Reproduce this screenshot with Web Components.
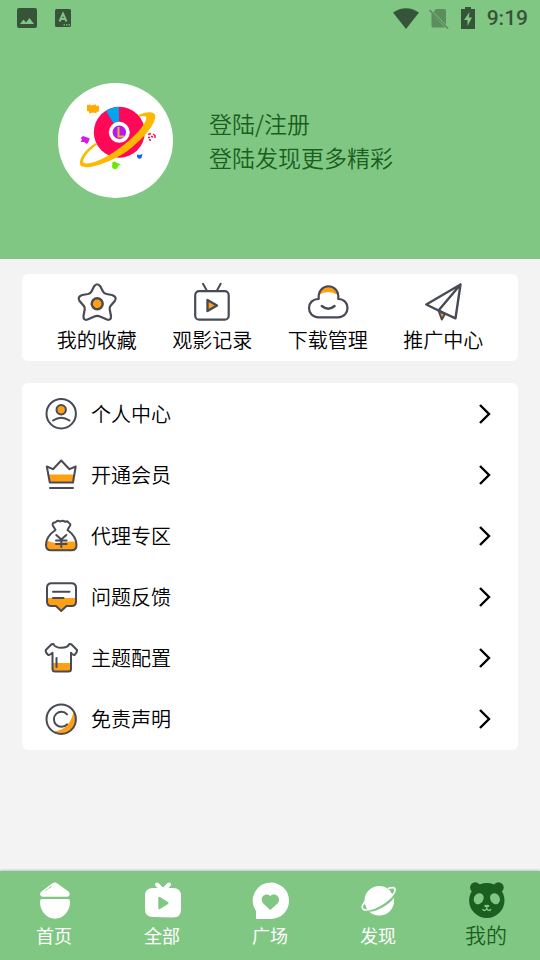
<!DOCTYPE html>
<html lang="zh-CN">
<head>
<meta charset="utf-8">
<meta name="viewport" content="width=device-width, initial-scale=1">
<title>我的</title>
<style>
  body { margin: 0; font-family: "Noto Sans CJK SC", sans-serif; background: #f3f3f3; color: #000; }
</style>
</head>
<body>
<app-shell>
  <status-bar slot="top" time="9:19"></status-bar>
  <profile-header slot="top">
    <span slot="title">登陆/注册</span>
    <span slot="subtitle">登陆发现更多精彩</span>
  </profile-header>
  <quick-card>
    <quick-item icon="star">我的收藏</quick-item>
    <quick-item icon="tv">观影记录</quick-item>
    <quick-item icon="cloud">下载管理</quick-item>
    <quick-item icon="plane">推广中心</quick-item>
  </quick-card>
  <menu-card>
    <menu-row icon="user">个人中心</menu-row>
    <menu-row icon="crown">开通会员</menu-row>
    <menu-row icon="bag">代理专区</menu-row>
    <menu-row icon="bubble">问题反馈</menu-row>
    <menu-row icon="shirt">主题配置</menu-row>
    <menu-row icon="copyright">免责声明</menu-row>
  </menu-card>
  <tab-bar slot="bottom">
    <tab-item icon="home">首页</tab-item>
    <tab-item icon="all">全部</tab-item>
    <tab-item icon="square">广场</tab-item>
    <tab-item icon="planet">发现</tab-item>
    <tab-item icon="panda" active>我的</tab-item>
  </tab-bar>
</app-shell>
<script>
const O = '#ff9f14';
const line = (size, inner) => `<svg viewBox="0 0 ${size} ${size}" width="${size}" height="${size}" fill="none" stroke="#484a56" stroke-width="2" stroke-linecap="round" stroke-linejoin="round" aria-hidden="true">${inner}</svg>`;
const solid = inner => `<svg viewBox="0 0 40 40" width="40" height="40" fill="currentColor" aria-hidden="true">${inner}</svg>`;
const ICONS = {
  star: line(40, `<path d="M17 4.500Q20.200 0 23.400 4.500L26 9.500Q27 11.500 29.500 12L35 13Q40.500 15 37.800 19L33.500 24Q32.300 25.400 32.700 27.500L34 34Q34.200 38.800 30 37.500L23 34.600Q20.200 33.300 17.400 34.600L10.500 37.500Q6.300 38.800 6.500 34L7.700 27.500Q8.100 25.400 6.900 24L2.600 19Q-.2 15 5.300 13L11 12Q13.500 11.500 14.500 9.500Z" stroke-width="2.200"/><circle cx="20.200" cy="21.700" r="5.500" fill="${O}" stroke-width="2.400"/>`),
  tv: line(40, `<rect x="3.200" y="9.200" width="33.500" height="28.500" rx="4" stroke-width="2.200"/><path d="M11 1.800L14.500 8M28.700 1.800L25.200 8"/><path d="M15.500 18v11l9.500-5.500Z" fill="${O}" stroke-width="2.400"/>`),
  cloud: line(40, `<path d="M10.700 13C12 1.500 28.500 1.500 30 13Q20 7 10.700 13Z" fill="${O}" stroke="none"/><path d="M10.700 17C9 0 32 0 30.300 17C36 17 39.500 21 39.500 26S36 35.300 30 35.300H10.500C4.500 35.300 1 31 1 26S4.500 17 10.700 17" stroke-width="2.200"/><path d="M13.800 24Q20.200 29.500 26.600 24" stroke-width="2.400"/>`),
  plane: line(40, `<path d="M15.500 28.500L18.800 37.500L22 32Z" fill="${O}"/><path d="M37.500 2.500L3.300 22.500L15.500 28.500L32.500 36.300ZL15.500 28.500" stroke-width="2.400"/>`),
  user: line(36, `<circle cx="18.200" cy="17.700" r="14.700"/><circle cx="18.200" cy="13.700" r="4.700" fill="${O}"/><path d="M10 24.500Q18.200 19 26.500 24.500"/>`),
  crown: line(36, `<path d="M5.500 17.500H31.500L29.500 25.500H7.500Z" fill="${O}" stroke="none"/><path d="M3.800 9.500L10 12.200L18.200 3.500L26.500 12.200L32.700 9.500L30 25.500H6.800Z"/><path d="M7 31H30"/>`),
  bag: line(36, `<path d="M4 22.500Q10 26 18 24.500T32.500 23.500Q36 32.300 29.500 32.300H7.500Q1 32.300 4 22.500Z" fill="${O}" stroke="none"/><path d="M12.500 12L9.800 7.500Q8.800 4.300 12.500 4.300Q14.500 1.800 17 3.500Q20 1.800 22 3.800Q24.500 2.500 26 5Q28.500 6.500 26.500 8.500L24.500 12C30 16 33.500 21 33.500 27Q33.500 32.300 28.500 32.300H8Q3 32.300 3 27C3 21 6.500 16 12.500 12"/><path d="M13.300 17L18.300 21.500L23.300 17M13 22.500H23.600M13 26H23.600M18.300 21.500V29"/>`),
  bubble: line(36, `<path d="M4 19H33V24L30 27H23.500L18.300 31.500L13 27H7L4 24Z" fill="${O}" stroke="none"/><path d="M8.500 4.200H28.500Q33 4.200 33 8.700V22.500Q33 27 28.500 27H23.500L18.200 32L13 27H8.500Q4 27 4 22.500V8.700Q4 4.200 8.500 4.200Z"/><path d="M10 12.700H26.500M10 19H20.500"/>`),
  shirt: line(36, `<path d="M10 23H28V31H10Z" fill="${O}" stroke="none"/><path d="M10.500 4Q12 7.800 18.300 7.800T26.300 4L28.300 4.200L34 10Q34.500 12 31.500 15Q30 15.600 28 12.700V29Q28 31.500 25.500 31.500H12Q9.500 31.500 9.500 29V12.700Q7 15.600 5.300 15Q2 12 2.800 10L8.500 4.200Z"/><path d="M13.500 18V27"/>`),
  copyright: line(36, `<path d="M30.500 10.500A14.500 14.500 0 0 1 11 30.600Q27 28.500 30.500 10.500Z" fill="${O}" stroke="none"/><circle cx="18.200" cy="18.200" r="14.700"/><path d="M24 13.300A7.500 7.500 0 1 0 24 23.300"/>`),
  home: solid(`<path d="M18.500 2.200Q20.700 .8 23 2.200L34.500 10.500Q36 12 35.700 13.500Q35.300 15.700 33 15.700H9Q6.500 15.700 6 13.500Q5.800 12 7.500 10.500Z"/><path d="M8 18H34Q36 18 36 21A15 16.700 0 0 1 6 21Q6 18 8 18Z"/><path d="M11.500 9.800L13.500 8.300M14.500 7.500L17.500 5.300" stroke="#81c784" fill="none"/>`),
  all: solid(`<path d="M15 3.500L19.500 8M27 3.500L22.500 8" stroke="currentColor" stroke-width="4" stroke-linecap="round"/><path fill-rule="evenodd" d="M11 7H31Q39 7 39 15V28.500Q39 36.500 31 36.500L11 36Q3 36 3 28V15Q3 7 11 7ZM16.300 16.500V27.500Q16.500 28.800 18 28L26 23Q27.200 22 26 21L18 16Q16.500 15.200 16.300 16.500Z"/>`),
  square: solid(`<path fill-rule="evenodd" d="M20.800 1.500A18.200 18.200 0 1 1 20.800 38H6V30A18.200 18.200 0 0 1 20.800 1.500ZM20.300 29L13 22.200C9 17 15 10.500 20.300 15C25.600 10.500 31.800 17 27.800 22.200Z"/>`),
  planet: solid(`<circle cx="21.300" cy="19.700" r="14.800"/><path d="M9 29.500C19 30.500 33.500 21 37 12.500" fill="none" stroke="#81c784" stroke-width="2.400"/><path d="M30 7.500C34 6 37.500 6 37 9.500C36 16.500 17 29 8.500 29C2.500 29 3.500 24.500 7.500 20" fill="none" stroke="currentColor" stroke-width="1.700"/><path d="M32 9.200L34.800 8.800Q35.300 10.800 33.500 12.500ZM7 23.500L8.300 26.500L5.700 26.700Q5.300 25.500 7 23.500Z" fill="#81c784"/>`),
  panda: solid(`<circle cx="9.300" cy="6.500" r="5.200"/><circle cx="32.500" cy="6.500" r="5.200"/><ellipse cx="20.800" cy="19.500" rx="17.700" ry="17.500"/><g fill="#81c784"><ellipse cx="12.700" cy="17.700" rx="4.700" ry="5.800" transform="rotate(30 12.700 17.700)"/><ellipse cx="29" cy="17.700" rx="4.700" ry="5.800" transform="rotate(-30 29 17.700)"/><ellipse cx="20.800" cy="25" rx="2.700" ry="1.300"/></g><path d="M16.500 28Q18 31 20.800 28Q23.600 31 25 28M20.800 25V28" fill="none" stroke="#81c784" stroke-width="1.300"/>`)
};

function define(name, render) {
  customElements.define(name, class extends HTMLElement {
    constructor() {
      super();
      this.attachShadow({ mode: 'open' });
    }
    connectedCallback() {
      this.shadowRoot.innerHTML = render(this);
    }
  });
}

define('app-shell', () => `
<style>
  :host { display: flex; flex-direction: column; min-height: 100vh; }
  header { background: #81c784; }
  main { flex: 1; display: flex; flex-direction: column; gap: 22px; padding: 15px 22px 22px; }
</style>
<header><slot name="top"></slot></header>
<main><slot></slot></main>
<slot name="bottom"></slot>`);

define('status-bar', el => `
<style>
  :host { display: flex; align-items: center; height: 36px; padding: 0 12px 0 17px; color: #365437; font: 500 21px/36px Roboto, sans-serif; }
  svg { display: block; }
  .left { display: flex; align-items: center; gap: 18px; flex: 1; }
  .right { display: flex; align-items: center; gap: 10px; }
</style>
<div class="left">
  <svg width="20" height="20" viewBox="0 0 20 20" aria-hidden="true"><path fill="currentColor" fill-rule="evenodd" d="M2 0H18Q20 0 20 2V18Q20 20 18 20H2Q0 20 0 18V2Q0 0 2 0ZM3 16H17L12.500 10L9 14.500L6.500 11.500Z"/></svg>
  <svg width="16" height="18" viewBox="0 0 16 18" aria-hidden="true"><rect width="16" height="18" rx="1.500" fill="currentColor"/><path d="M4.500 12.500L8 4.500L11.500 12.500M6 10H10" fill="none" stroke="#81c784" stroke-width="1.900"/><path d="M8.500 15.800H15" stroke="#81c784" stroke-width="1.200" stroke-dasharray="1.500 1"/></svg>
</div>
<div class="right">
  <svg width="26" height="21" viewBox="0 0 26 21" aria-hidden="true"><path fill="currentColor" d="M0 4.500Q13-4 26 4.500L13 21Z"/></svg>
  <svg width="20" height="21" viewBox="0 0 20 21" aria-hidden="true"><g opacity=".5"><path fill="currentColor" d="M7 1H15.500Q17 1 17 2.500V16.500L4.500 4ZM2.500 5L16 19.500H4Q2.500 19.500 2.500 18Z"/><path d="M.5 2L19 20.500" stroke="currentColor" stroke-width="1.600"/></g></svg>
  <svg width="18" height="22" viewBox="0 0 18 22" aria-hidden="true"><path fill="currentColor" d="M2 2H6V0H12V2H16V22H2Z"/><path fill="#81c784" d="M10.500 5L5 13H8.500V19L13 10.500H9.800Z"/></svg>
  <time>${el.getAttribute('time')}</time>
</div>`);

define('profile-header', () => `
<style>
  :host { display: block; padding: 47px 58px 61px; }
  a { display: flex; align-items: center; gap: 36px; color: #1b5e20; text-decoration: none; font-size: 23px; font-weight: 350; line-height: 34px; }
  .avatar { flex: none; width: 115px; height: 115px; border-radius: 50%; background: #fff; }
  .avatar svg { display: block; }
  .text { display: flex; flex-direction: column; padding-bottom: 2px; }
</style>
<a href="#login">
  <div class="avatar">
    <svg width="115" height="115" viewBox="0 0 115 115" aria-hidden="true">
      <path fill="#ffab00" d="M29 22L32 21.500L33 22.500L38 21.500V23L41 22.500V28.500L38 29L39 30.500L35 29.500L31 30.500V28.500L29 28Z"/>
      <path fill="#d21bf0" d="M25 53L28 54L31.700 55.500L30.500 59L29 61L26 59L22.700 59L24 56.500L22.700 55Z"/>
      <path fill="#6be800" d="M54.500 79L57 78.500L59 80L63 81.500L60 83L59.500 85L57 86.500L54 84.500Z"/>
      <path fill="#1266e8" d="M79 71.500L82 72L84.500 70.700L83.500 75L81 76L79 74Z"/>
      <path d="M90 51.500L93 50.500M95 51L97 52.500V55M90 54.500H92M93 53.500L95 54M91 56.500L93 57.500" stroke="#f8135f" stroke-width="1.500" fill="none"/>
      <path fill="#ffb800" d="M22 82C21 73 30 65 37.500 60L39 61.500C32 67 25.500 73 25 79ZM80.500 32C87 28.500 97 27.500 97.300 33L88 38C90 32 85 32.500 81 34Z"/>
      <circle cx="61.300" cy="49.300" r="25.500" fill="#ff0857"/>
      <path d="M61 49V23.800Q53.500 24 48 28Z" fill="#00a4ef"/>
      <circle cx="61.300" cy="49.300" r="10.500" fill="#fff"/>
      <circle cx="61.300" cy="49.300" r="6.700" fill="#b818f0"/>
      <path d="M60.500 44V53.500H66" fill="none" stroke="#e8b323" stroke-width="2"/>
      <path fill="#ffb800" d="M25 77C23 84 40 80 56 69C72 58 84 47 88.500 36L91 32L97.300 32C98 42 84 57 68 69C48 82 20 90 22 79Z"/>
    </svg>
  </div>
  <div class="text"><slot name="title"></slot><slot name="subtitle"></slot></div>
</a>`);

define('quick-card', () => `
<style>
  :host { display: grid; grid-template-columns: repeat(4, 1fr); padding: 8px 17px 6px; background: #fff; border-radius: 6px; }
</style>
<slot></slot>`);

define('quick-item', el => `
<style>
  :host { display: block; }
  a { display: flex; flex-direction: column; align-items: center; gap: 3px; color: #000; text-decoration: none; font-size: 20px; font-weight: 350; line-height: 30px; white-space: nowrap; }
  svg { display: block; overflow: visible; }
</style>
<a href="#${el.getAttribute('icon')}">${ICONS[el.getAttribute('icon')]}<span><slot></slot></span></a>`);

define('menu-card', () => `
<style>
  :host { display: block; background: #fff; border-radius: 6px; padding-bottom: 1px; }
</style>
<slot></slot>`);

define('menu-row', el => `
<style>
  :host { display: block; }
  a { display: flex; align-items: center; gap: 12px; height: 61px; padding: 0 26px 0 21px; color: #000; text-decoration: none; font-size: 20px; font-weight: 350; line-height: 30px; }
  svg { display: block; flex: none; }
  span { flex: 1; }
</style>
<a href="#${el.getAttribute('icon')}">${ICONS[el.getAttribute('icon')]}<span><slot></slot></span><svg width="14" height="22" viewBox="0 0 14 22" aria-hidden="true"><path d="M2 2L11 11L2 20" fill="none" stroke="#000" stroke-width="2.400"/></svg></a>`);

define('tab-bar', () => `
<style>
  :host { display: block; background: #81c784; box-shadow: 0 -1px 2px rgba(0, 0, 0, .2); }
  nav { display: grid; grid-template-columns: repeat(5, 1fr); }
</style>
<nav aria-label="主导航"><slot></slot></nav>`);

define('tab-item', el => `
<style>
  :host { display: block; }
  a { display: flex; flex-direction: column; align-items: center; padding: 10px 0 11px; color: #fff; text-decoration: none; font-size: 18px; line-height: 28px; }
  :host([active]) a { color: #1b5e20; font-size: 21px; font-weight: 350; }
  :host([active]) span { line-height: 26px; }
  svg { display: block; }
</style>
<a href="#${el.getAttribute('icon')}"${el.hasAttribute('active') ? ' aria-current="page"' : ''}>${ICONS[el.getAttribute('icon')]}<span><slot></slot></span></a>`);
</script>
</body>
</html>
